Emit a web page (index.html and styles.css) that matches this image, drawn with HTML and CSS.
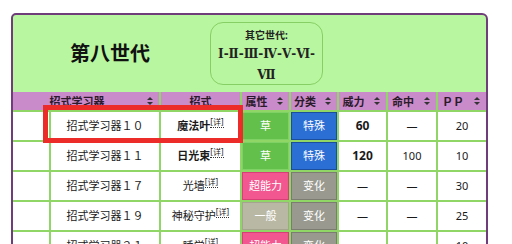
FILE: index.html
```html
<!DOCTYPE html>
<html lang="zh-CN">
<head>
   <meta charset="UTF-8">
   <meta name="viewport" content="width=device-width, initial-scale=1.0">
   <title>招式学习器 - 第八世代</title>
   <link rel="stylesheet" href="styles.css">
</head>
<body>
   <div class="panel">
       <div class="gen-head">
           <div class="gen-title">第八世代</div>
           <div class="gen-other">
               <div class="gen-other-label">其它世代:</div>
               <div class="gen-other-list">Ⅰ-Ⅱ-Ⅲ-Ⅳ-Ⅴ-Ⅵ-<br>Ⅶ</div>
           </div>
       </div>

       <div class="moves">
           <table>
               <colgroup>
                   <col class="c-no">
                   <col class="c-tm">
                   <col class="c-move">
                   <col class="c-type">
                   <col class="c-cat">
                   <col class="c-num">
                   <col class="c-acc">
                   <col class="c-pp">
               </colgroup>
               <thead>
                   <tr>
                       <th colspan="2">招式学习器<span class="sort"></span></th>
                       <th class="plain">招式</th>
                       <th>属性<span class="sort"></span></th>
                       <th>分类<span class="sort"></span></th>
                       <th>威力<span class="sort"></span></th>
                       <th>命中<span class="sort"></span></th>
                       <th>ＰＰ<span class="sort"></span></th>
                   </tr>
               </thead>
               <tbody>
                   <tr>
                       <td></td>
                       <td>招式学习器１０</td>
                       <td class="move strong">魔法叶<sup>[详]</sup></td>
                       <td class="type grass">草</td>
                       <td class="cat special">特殊</td>
                       <td class="strong">60</td>
                       <td>—</td>
                       <td>20</td>
                   </tr>
                   <tr>
                       <td></td>
                       <td>招式学习器１１</td>
                       <td class="move strong">日光束<sup>[详]</sup></td>
                       <td class="type grass">草</td>
                       <td class="cat special">特殊</td>
                       <td class="strong">120</td>
                       <td>100</td>
                       <td>10</td>
                   </tr>
                   <tr>
                       <td></td>
                       <td>招式学习器１７</td>
                       <td class="move">光墙<sup>[详]</sup></td>
                       <td class="type psychic">超能力</td>
                       <td class="cat status">变化</td>
                       <td>—</td>
                       <td>—</td>
                       <td>30</td>
                   </tr>
                   <tr>
                       <td></td>
                       <td>招式学习器１９</td>
                       <td class="move">神秘守护<sup>[详]</sup></td>
                       <td class="type normal">一般</td>
                       <td class="cat status">变化</td>
                       <td>—</td>
                       <td>—</td>
                       <td>25</td>
                   </tr>
                   <tr>
                       <td></td>
                       <td>招式学习器２１</td>
                       <td class="move">睡觉<sup>[详]</sup></td>
                       <td class="type psychic">超能力</td>
                       <td class="cat status">变化</td>
                       <td>—</td>
                       <td>—</td>
                       <td>10</td>
                   </tr>
               </tbody>
           </table>
           <div class="mark"></div>
       </div>
   </div>
</body>
</html>
```

FILE: styles.css
```css
body {
    margin: 0;
    background-color: #ffffff;
    font-family: 'Noto Sans', 'Noto Sans CJK SC', sans-serif;
    color: #1a1a1a;
}

.panel {
    margin: 13px 0 0 11px;
    width: 473px;
    border: 2px solid #6f3d79;
    border-radius: 5px 6px 0 0;
    background-color: #b8f6a0;
}

/* generation header */

.gen-head {
    display: flex;
    align-items: center;
    height: 77px;
}

.gen-title {
    width: 194px;
    text-align: center;
    font-size: 20px;
    font-weight: bold;
    line-height: 24px;
    color: #111;
}

.gen-other {
    margin-left: 3px;
    width: 111px;
    height: 61px;
    border: 1px solid #86cf64;
    border-radius: 13px;
    text-align: center;
    font-weight: bold;
    color: #222;
}

.gen-other-label {
    margin-top: 5px;
    font-size: 10px;
    line-height: 14px;
}

.gen-other-list {
    margin-top: 2px;
    font-family: 'DejaVu Serif', 'Liberation Serif', serif;
    font-size: 12px;
    line-height: 21px;
}

/* move table */

.moves {
    position: relative;
}

table {
    width: 473px;
    border-collapse: collapse;
    border-style: hidden;
    table-layout: fixed;
    background-color: #ffffff;
    font-size: 11px;
}

.c-no { width: 37px; }
.c-tm { width: 110px; }
.c-move { width: 81px; }
.c-type { width: 49px; }
.c-cat { width: 48px; }
.c-num { width: 49px; }
.c-acc { width: 50px; }
.c-pp { width: 49px; }

th, td {
    border: 2px solid #8fd666;
    text-align: center;
    padding: 0;
    white-space: nowrap;
}

th {
    position: relative;
    height: 18px;
    padding-right: 18px;
    background-color: #ca8bca;
    font-weight: bold;
    line-height: 15px;
    color: #2a1a2a;
}

th.plain {
    padding-right: 0;
}

.sort {
    position: absolute;
    right: 6px;
    top: 50%;
    margin-top: -4px;
    width: 6px;
    height: 8px;
}

.sort::before,
.sort::after {
    content: '';
    position: absolute;
    left: 0;
    border-left: 3px solid transparent;
    border-right: 3px solid transparent;
}

.sort::before {
    top: 0;
    border-bottom: 3px solid #333;
}

.sort::after {
    bottom: 0;
    border-top: 3px solid #333;
}

td {
    height: 28px;
    line-height: 16px;
}

.strong {
    font-weight: bold;
    font-size: 12px;
}

.move.strong {
    font-size: 11px;
}

sup {
    font-size: 8px;
    font-weight: normal;
    line-height: 0;
    vertical-align: 5px;
    border-bottom: 1px dotted #333;
}

.type,
.cat {
    color: #ffffff;
}

.grass {
    background-color: #63c04a;
    box-shadow: inset 0 0 0 1px #7fd065;
}

.psychic {
    background-color: #f25790;
    box-shadow: inset 0 0 0 1px #d83f76;
}

.normal {
    background-color: #b9b8a4;
    box-shadow: inset 0 0 0 1px #a5a48f;
}

.special {
    background-color: #2b6ed4;
    box-shadow: inset 0 0 0 1px #1b4f9e;
}

.status {
    background-color: #99998f;
    box-shadow: inset 0 0 0 1px #7c7c73;
}

/* highlight frame drawn over the first row */
.mark {
    position: absolute;
    left: 30px;
    top: 13px;
    width: 190px;
    height: 28px;
    border: 5px solid #ec2c29;
    pointer-events: none;
}
```
